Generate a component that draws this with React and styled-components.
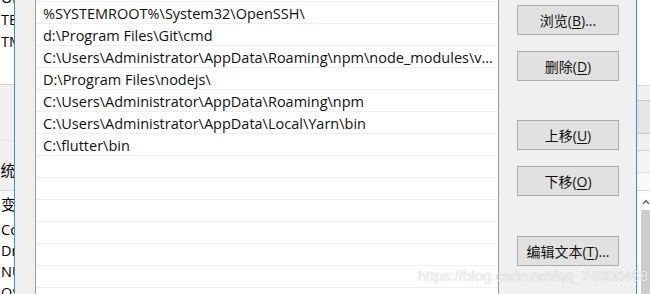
import React from "react";
import styled, { createGlobalStyle } from "styled-components";

const GlobalStyle = createGlobalStyle`
  html, body {
    margin: 0;
    padding: 0;
    background: #f0f0f0;
    overflow: hidden;
  }
  body {
    font-family: "Open Sans", "Noto Sans CJK SC", sans-serif;
    color: #000;
  }
`;

const paths = [
  "%SYSTEMROOT%\\System32\\OpenSSH\\",
  "d:\\Program Files\\Git\\cmd",
  "C:\\Users\\Administrator\\AppData\\Roaming\\npm\\node_modules\\v...",
  "D:\\Program Files\\nodejs\\",
  "C:\\Users\\Administrator\\AppData\\Roaming\\npm",
  "C:\\Users\\Administrator\\AppData\\Local\\Yarn\\bin",
  "C:\\flutter\\bin",
  "", "", "", "", "", "", "",
];

const buttons = [
  { label: "浏览", key: "B", dots: true, gap: 0 },
  { label: "删除", key: "D", dots: false, gap: 0 },
  { label: "上移", key: "U", dots: false, gap: 23 },
  { label: "下移", key: "O", dots: false, gap: 0 },
  { label: "编辑文本", key: "T", dots: true, gap: 24 },
];

const userVars = ["OneDrive", "TEMP", "TMP"];
const sysVars = ["ComSpec", "DriverData", "NUMBER_OF_PROCESSORS", "OS"];

const Screen = styled.div`
  position: relative;
  display: flex;
  width: 650px;
  height: 294px;
  overflow: hidden;
`;

/* window behind the dialog, left part */
const BackLeft = styled.div`
  width: 14px;
  flex: none;
  display: flex;
  flex-direction: column;
  overflow: hidden;
  background: #f0f0f0;
  font-size: 14.5px;
  white-space: nowrap;
`;

const UserList = styled.div`
  height: 84px;
  flex: none;
  background: #fff;
  border-bottom: 1px solid #d5d5d5;
  overflow: hidden;
`;

const VarRows = styled.div`
  margin-top: ${(p) => p.$offset}px;
`;

const VarRow = styled.div`
  height: ${(p) => p.$h}px;
  line-height: ${(p) => p.$h}px;
  padding-left: 1px;
`;

const BackGap = styled.div`
  height: ${(p) => p.$h}px;
  flex: none;
  border-bottom: ${(p) => (p.$line ? "1px solid #e3e3e3" : "none")};
`;

const GroupLabel = styled.div`
  height: 49px;
  flex: none;
  line-height: 60px;
  margin-left: -14px;
  border-bottom: 1px solid #d5d5d5;
`;

const SysList = styled.div`
  flex: 1;
  background: #fff;
`;

/* the edit dialog */
const Dialog = styled.div`
  width: 621px;
  flex: none;
  display: flex;
  background: #f0f0f0;
  border-left: 1px solid #3c8fd8;
  border-right: 1px solid #3c8fd8;
`;

const ListBox = styled.div`
  width: 462px;
  margin-left: 20px;
  padding-top: 1px;
  background: #fff;
  border-left: 1px solid #9a9a9a;
  border-right: 1px solid #9a9a9a;
  overflow: hidden;
`;

const PathRow = styled.div`
  height: 22px;
  box-sizing: border-box;
  border-top: 1px solid #efefef;
  padding: 1px 0 0 7px;
  font-size: 14.5px;
  line-height: 21px;
  color: #111;
  white-space: nowrap;
  overflow: hidden;
`;

const ButtonColumn = styled.div`
  display: flex;
  flex-direction: column;
  gap: 16px;
  margin-left: 18px;
  padding-top: 5px;
`;

const Button = styled.div`
  width: 102px;
  height: 30px;
  box-sizing: border-box;
  margin-top: ${(p) => p.$gap}px;
  display: flex;
  align-items: center;
  justify-content: center;
  background: #e1e1e1;
  border: 1px solid #adadad;
  font-size: 14px;
  color: #111;
  u {
    text-decoration: underline;
    text-underline-offset: 2px;
  }
`;

/* window behind the dialog, right part */
const BackRight = styled.div`
  flex: 1;
  display: flex;
  flex-direction: column;
  background: #f0f0f0;
`;

const RightBlock = styled.div`
  height: ${(p) => p.$h}px;
  flex: none;
  box-sizing: border-box;
  background: ${(p) => p.$bg};
  border-bottom: 1px solid ${(p) => p.$line};
`;

const ScrollArea = styled.div`
  flex: 1;
  display: flex;
  flex-direction: column;
  background: #fff;
  padding-left: 4px;
`;

const ScrollArrow = styled.svg`
  display: block;
  margin: 8px 0 5px 1px;
`;

const Thumb = styled.div`
  flex: 1;
  background: #cdcdcd;
`;

const Watermark = styled.div`
  position: absolute;
  left: 418px;
  top: 267px;
  font-family: "Liberation Sans", Arial, sans-serif;
  font-size: 15px;
  color: rgba(255, 255, 255, 0.85);
  text-shadow: 0 0 1px rgba(0, 0, 0, 0.3);
  white-space: nowrap;
  pointer-events: none;
`;

export default function App() {
  return (
    <Screen>
      <GlobalStyle />
      <BackLeft>
        <UserList>
          <VarRows $offset={-13}>
            {userVars.map((v) => (
              <VarRow key={v} $h={22}>
                {v}
              </VarRow>
            ))}
          </VarRows>
        </UserList>
        <BackGap $h={55} $line />
        <GroupLabel>系统变量(S)</GroupLabel>
        <SysList>
          <VarRow $h={28}>变量</VarRow>
          {sysVars.map((v) => (
            <VarRow key={v} $h={21}>
              {v}
            </VarRow>
          ))}
        </SysList>
      </BackLeft>

      <Dialog>
        <ListBox>
          {paths.map((p, i) => (
            <PathRow key={i}>{p}</PathRow>
          ))}
        </ListBox>
        <ButtonColumn>
          {buttons.map((b) => (
            <Button key={b.key} $gap={b.gap}>
              {b.label}(<u>{b.key}</u>){b.dots ? "..." : ""}
            </Button>
          ))}
        </ButtonColumn>
      </Dialog>

      <BackRight>
        <RightBlock $h={86} $bg="#fff" $line="#d5d5d5" />
        <RightBlock $h={15} $bg="#f0f0f0" $line="#c8c8c8" />
        <RightBlock $h={33} $bg="#e5e5e5" $line="#c8c8c8" />
        <RightBlock $h={17} $bg="#f0f0f0" $line="#d5d5d5" />
        <RightBlock $h={22} $bg="#f5f5f5" $line="#dcdcdc" />
        <RightBlock $h={18} $bg="#fafafa" $line="#d5d5d5" />
        <ScrollArea>
          <ScrollArrow width="8" height="6" viewBox="0 0 8 6">
            <path d="M1 5 L4 1.5 L7 5" fill="none" stroke="#606060" strokeWidth="1.3" />
          </ScrollArrow>
          <Thumb />
        </ScrollArea>
      </BackRight>

      <Watermark>https://blog.csdn.net/qq_24800488</Watermark>
    </Screen>
  );
}
